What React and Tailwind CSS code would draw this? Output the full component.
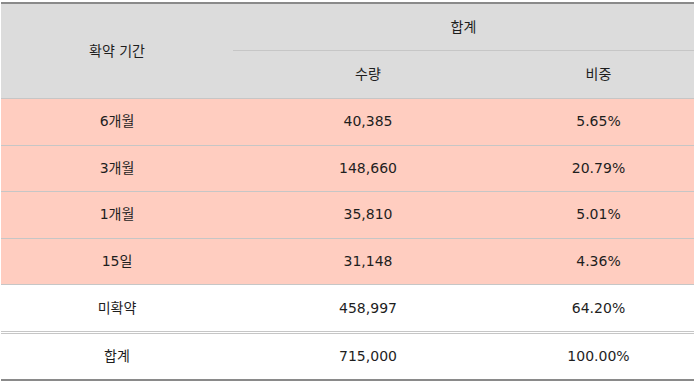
const rows = [
  { term: "6개월", qty: "40,385", ratio: "5.65%", pink: true },
  { term: "3개월", qty: "148,660", ratio: "20.79%", pink: true },
  { term: "1개월", qty: "35,810", ratio: "5.01%", pink: true },
  { term: "15일", qty: "31,148", ratio: "4.36%", pink: true },
  { term: "미확약", qty: "458,997", ratio: "64.20%", pink: false },
];

const cols = "grid grid-cols-[232px_270px_191px]";

export default function App() {
  return (
    <div
      className="bg-white w-[696px] h-[383px] pt-[2px] pl-[1px] text-[14px] text-[#1e1e1e]"
      style={{ fontFamily: '"DejaVu Sans", "Noto Sans CJK KR", sans-serif' }}
    >
      <div className="w-[693px] border-t-2 border-b-2 border-[#8a8a8a]">
        {/* 헤더 */}
        <div className={`${cols} grid-rows-[47px_47px] bg-[#dcdcdc] border-b border-[#c6c6c6]`}>
          <div className="row-span-2 flex items-center justify-center">확약 기간</div>
          <div className="col-span-2 flex items-center justify-center border-b border-[#c6c6c6]">합계</div>
          <div className="flex items-center justify-center">수량</div>
          <div className="flex items-center justify-center">비중</div>
        </div>

        {rows.map((r, i) => (
          <div
            key={r.term}
            className={`${cols} ${r.pink ? "bg-[#ffcdc0]" : "bg-white"} ${
              i < 4 ? "border-b border-[#c6c6c6] h-[46.6px]" : "h-[46px]"
            }`}
          >
            <div className="flex items-center justify-center">{r.term}</div>
            <div className="flex items-center justify-center">{r.qty}</div>
            <div className="flex items-center justify-center">{r.ratio}</div>
          </div>
        ))}

        {/* 합계 */}
        <div className={`${cols} h-[48px] border-t-[3px] border-double border-[#c6c6c6]`}>
          <div className="flex items-center justify-center">합계</div>
          <div className="flex items-center justify-center">715,000</div>
          <div className="flex items-center justify-center">100.00%</div>
        </div>
      </div>
    </div>
  );
}
